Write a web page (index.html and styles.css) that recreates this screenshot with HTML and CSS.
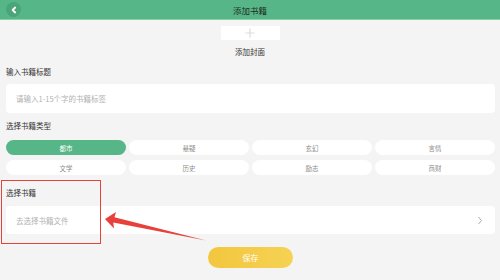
FILE: index.html
```html
<!DOCTYPE html>
<html lang="zh">
<head>
<meta charset="utf-8">
<link rel="stylesheet" href="styles.css">
</head>
<body>
<header class="topbar">
  <span class="back"><svg width="8" height="8" viewBox="0 0 8 8"><path d="M5.2 1.5 L2.6 4 L5.2 6.5" fill="none" stroke="#fff" stroke-width="1.8" stroke-linecap="round" stroke-linejoin="round"/></svg></span>
  <span class="title">添加书籍</span>
</header>
<section class="cover">
  <div class="cover-box"><svg width="10" height="10" viewBox="0 0 10 10"><path d="M5 0.5 V9.5 M0.5 5 H9.5" stroke="#dcdcdc" stroke-width="1.2"/></svg></div>
  <div class="cover-label">添加封面</div>
</section>
<main class="form">
  <div class="label l1">输入书籍标题</div>
  <div class="field title-field"><span class="ph">请输入1-15个字的书籍标签</span></div>
  <div class="label l2">选择书籍类型</div>
  <div class="chips">
    <span class="chip active">都市</span>
    <span class="chip">悬疑</span>
    <span class="chip">玄幻</span>
    <span class="chip">言情</span>
    <span class="chip">文学</span>
    <span class="chip">历史</span>
    <span class="chip">励志</span>
    <span class="chip">商财</span>
  </div>
  <div class="label l3">选择书籍</div>
  <div class="field file-field"><span class="ph">去选择书籍文件</span>
    <svg class="chev" width="6" height="9" viewBox="0 0 6 9"><path d="M1.5 1 L4.5 4.5 L1.5 8" fill="none" stroke="#aaa" stroke-width="1"/></svg>
  </div>
  <div class="save-wrap"><button class="save">保存</button></div>
</main>
<div class="mark-box"></div>
<svg class="mark-arrow" width="500" height="280" viewBox="0 0 500 280">
  <polygon points="105,219 116,212 114.5,217.3 206,240.5 113.3,222.6 114,228.5" fill="#e8403a"/>
</svg>
</body>
</html>
```
FILE: styles.css
```css
* { box-sizing: border-box; }
html, body { margin: 0; padding: 0; }
body {
  width: 500px;
  height: 280px;
  overflow: hidden;
  background: #f4f4f4;
  font-family: "Noto Sans CJK SC", "Noto Sans", sans-serif;
  color: #333;
  position: relative;
}
.topbar {
  height: 20px;
  background: #57b688;
  border-bottom: 1px solid #8ccfaa;
  display: flex;
  align-items: center;
  justify-content: center;
  position: relative;
}
.back {
  position: absolute;
  left: 6px;
  top: 2px;
  width: 15px;
  height: 15px;
  border-radius: 50%;
  background: #4aa57a;
  display: flex;
  align-items: center;
  justify-content: center;
}
.title {
  font-size: 8.5px;
  line-height: 12px;
  color: #1f2d25;
}
.cover {
  display: flex;
  flex-direction: column;
  align-items: center;
}
.cover-box {
  margin-top: 6px;
  width: 59px;
  height: 14px;
  background: #fff;
  display: flex;
  align-items: center;
  justify-content: center;
}
.cover-label {
  margin-top: 6px;
  font-size: 7.5px;
  line-height: 12px;
  color: #333;
}
.form {
  padding: 0 5px 0 6px;
  display: flex;
  flex-direction: column;
}
.label {
  font-size: 7.5px;
  line-height: 12px;
  color: #333;
}
.l1 { margin-top: 8px; }
.l2 { margin-top: 7px; }
.l3 { margin-top: 12px; }
.field {
  background: #fff;
  border-radius: 4px;
  display: flex;
  align-items: center;
  padding: 0 10px;
}
.title-field { margin-top: 6px; height: 29px; }
.file-field { margin-top: 7px; height: 28px; justify-content: space-between; padding-right: 12px; }
.ph {
  font-size: 7.5px;
  color: #b2b2b2;
}
.chips {
  margin-top: 8px;
  display: grid;
  grid-template-columns: repeat(4, 1fr);
  column-gap: 3px;
  row-gap: 5px;
}
.chip {
  height: 15px;
  border-radius: 8px;
  background: #fff;
  font-size: 6.5px;
  color: #8c8c8c;
  display: flex;
  align-items: center;
  justify-content: center;
}
.chip.active {
  background: #57b688;
  color: #fff;
}
.save-wrap {
  margin-top: 13px;
  display: flex;
  justify-content: center;
}
.save {
  width: 85px;
  height: 21px;
  border: none;
  border-radius: 11px;
  background: linear-gradient(90deg, #f3c63e, #f6d253);
  color: #fff;
  font-family: inherit;
  font-size: 8px;
  padding: 0;
}
.mark-box {
  position: absolute;
  left: 1px;
  top: 180px;
  width: 100px;
  height: 64px;
  border: 1.5px solid #e8403a;
}
.mark-arrow {
  position: absolute;
  left: 0;
  top: 0;
  pointer-events: none;
}
```
